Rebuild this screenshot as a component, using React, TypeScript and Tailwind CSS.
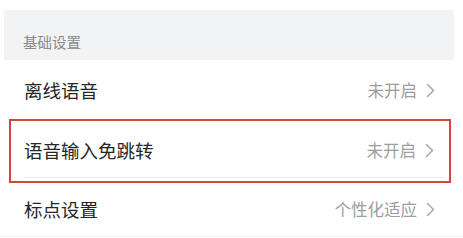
const FONT = "font-['Noto_Sans_CJK_SC','Noto_Sans',sans-serif]"

function Chevron() {
  return (
    <svg width="9" height="15" viewBox="0 0 9 15" className="ml-[9px]">
      <polyline points="1.5,1.5 7.5,7.5 1.5,13.5" fill="none" stroke="#a8a8a8" strokeWidth="1.5" strokeLinecap="round" strokeLinejoin="round" />
    </svg>
  )
}

function Row({ label, value }: { label: string; value: string }) {
  return (
    <div className="flex h-full items-center justify-between">
      <span className="text-[18.5px] leading-none text-[#262626]">{label}</span>
      <span className="flex items-center text-[16.5px] leading-none text-[#9d9d9d]">
        {value}
        <Chevron />
      </span>
    </div>
  )
}

export default function App() {
  return (
    <div className={`h-[238px] w-[463px] overflow-hidden bg-white pt-[10px] ${FONT}`}>
      {/* section header */}
      <div className="ml-[4px] h-[50px] w-[450px] bg-[#f2f3f5] pl-[19px] pt-[19px]">
        <span className="text-[14.5px] leading-none text-[#8a8a8a]">基础设置</span>
      </div>

      <div className="h-[59px] pl-[24px] pr-[28px] pt-[2px]">
        <Row label="离线语音" value="未开启" />
      </div>

      {/* highlighted row */}
      <div className="ml-[9px] h-[64px] w-[442px] border-2 border-[#d4473f]">
        <div className="flex h-full flex-col">
          <div className="flex-1 pl-[13px] pr-[15px] pt-[2px]">
            <Row label="语音输入免跳转" value="未开启" />
          </div>
          <div className="mb-[3px] ml-[11px] mr-[4px] h-px bg-[#e6ebf1]" />
        </div>
      </div>

      <div className="h-[54px] border-b border-[#f0f2f5] pl-[24px] pr-[28px]">
        <Row label="标点设置" value="个性化适应" />
      </div>
    </div>
  )
}
